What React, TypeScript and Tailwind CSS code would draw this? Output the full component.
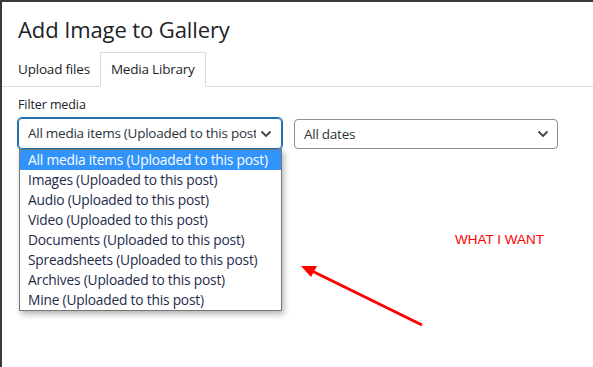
import React from "react";

const items = [
  "All media items (Uploaded to this post)",
  "Images (Uploaded to this post)",
  "Audio (Uploaded to this post)",
  "Video (Uploaded to this post)",
  "Documents (Uploaded to this post)",
  "Spreadsheets (Uploaded to this post)",
  "Archives (Uploaded to this post)",
  "Mine (Uploaded to this post)",
];

const Chevron = () => (
  <svg width="12" height="8" viewBox="0 0 12 8" className="shrink-0">
    <path d="M1.5 1.5 6 6l4.5-4.5" fill="none" stroke="#3c434a" strokeWidth="1.8" />
  </svg>
);

const App = () => {
  return (
    <div
      className="relative w-[593px] h-[367px] overflow-hidden bg-[#3a3a3a] pt-[2px] pl-[2px]"
      style={{ fontFamily: '"Open Sans", "Noto Sans", sans-serif' }}
    >
      <div className="h-full bg-white text-[#1d2327]">
        {/* title */}
        <h1 className="pl-[16px] pt-[12px] text-[22px] leading-[30px] tracking-[-0.1px]">
          Add Image to Gallery
        </h1>

        {/* tabs */}
        <div className="mt-[8px] flex items-end border-b border-[#dcdcde] pl-[8px] h-[35px]">
          <div className="px-[8px] h-[34px] flex items-center text-[13.5px] tracking-[-0.2px]">
            Upload files
          </div>
          <div className="ml-[2px] px-[10px] h-[35px] -mb-px flex items-center border border-[#dcdcde] border-b-white bg-white text-[13.5px] tracking-[-0.2px]">
            Media Library
          </div>
        </div>

        {/* filters */}
        <div className="pl-[16px] pt-[9px]">
          <div className="text-[12.5px] leading-[18px] tracking-[-0.1px]">Filter media</div>
          <div className="mt-[4px] flex gap-[12px]">
            <div className="relative">
              <div className="w-[264px] h-[31px] rounded-[4px] border border-[#2271b1] shadow-[0_0_0_1px_#2271b1] flex items-center pl-[9px] pr-[9px] gap-[4px]">
                <span className="flex-1 overflow-hidden whitespace-nowrap text-[13.5px] tracking-[-0.25px] text-[#2c3338]">
                  All media items (Uploaded to this post)
                </span>
                <Chevron />
              </div>

              {/* open list */}
              <ul className="absolute left-[1px] top-[31px] w-[263px] border border-[#767676] bg-white shadow-[2px_3px_6px_rgba(0,0,0,0.3)] z-10">
                {items.map((t, i) => (
                  <li
                    key={t}
                    className={
                      "h-[20px] leading-[20px] pl-[8px] whitespace-nowrap text-[13.75px] tracking-[-0.2px] " +
                      (i === 0 ? "bg-[#3294fb] text-white" : "text-[#1e2b4a]")
                    }
                  >
                    {t}
                  </li>
                ))}
              </ul>
            </div>

            <div className="w-[264px] h-[30px] mt-[1px] rounded-[4px] border border-[#8c8f94] flex items-center pl-[9px] pr-[8px]">
              <span className="flex-1 text-[13.5px] tracking-[-0.25px] text-[#2c3338]">All dates</span>
              <Chevron />
            </div>
          </div>
        </div>
      </div>

      {/* annotation */}
      <div
        className="absolute left-[455px] top-[232px] text-[13.5px] text-[#ff0000] leading-[16px]"
        style={{ fontFamily: '"Liberation Sans", Arial, sans-serif' }}
      >
        WHAT I WANT
      </div>
      <svg className="absolute left-0 top-0" width="593" height="367">
        <line x1="422" y1="325" x2="310" y2="270" stroke="#ff0000" strokeWidth="3" />
        <polygon points="301,266 317,266 311,277" fill="#ff0000" />
      </svg>
    </div>
  );
};

export default App;
